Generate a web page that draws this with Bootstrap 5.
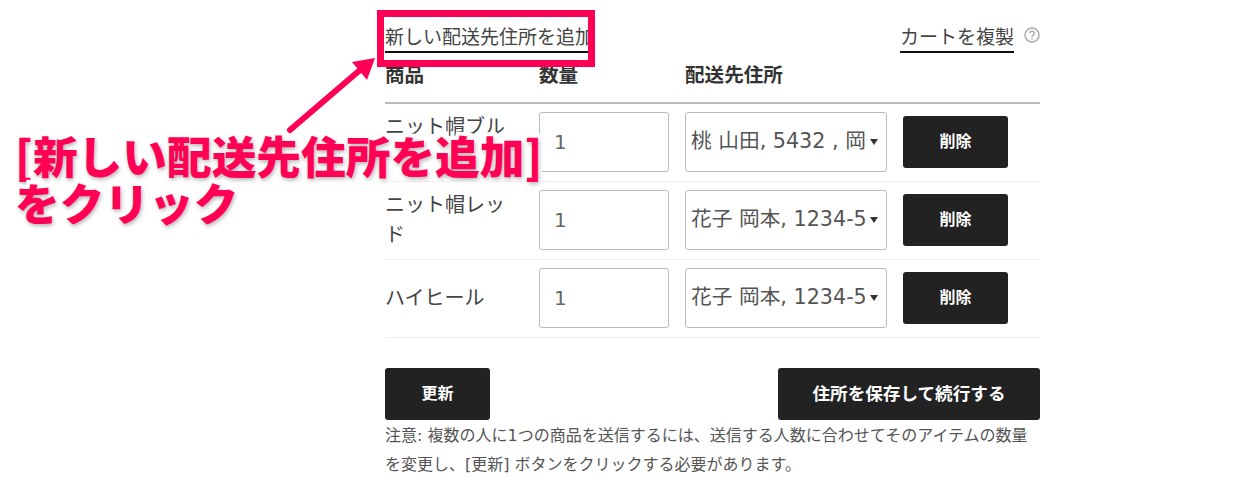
<!DOCTYPE html>
<html lang="ja">
<head>
  <meta charset="UTF-8">
  <title>複数の住所に配送</title>
  <link href="https://cdn.jsdelivr.net/npm/bootstrap@5.3.2/dist/css/bootstrap.min.css" rel="stylesheet">
  <style>
    body { height: 497px; overflow: hidden; background: #fff; color: #444; font-family: "DejaVu Sans", "Noto Sans CJK JP", sans-serif; }
    .page-wrap { width: 655px; margin-left: 385px; padding-top: 19px; }
    .top-links { height: 45px; font-size: 19px; line-height: 36px; }
    .top-links a { color: #444; text-decoration: none; border-bottom: 2px solid #111; display: inline-block; height: 34px; }
    .help-dot { width: 16px; height: 16px; margin: 8px 0 0 10px; }
    .ship-table { table-layout: fixed; width: 655px; margin: 0; }
    .ship-table th { font-size: 19.6px; line-height: 24px; font-weight: 700; color: #333; padding: 0 0 14px; border-bottom: 2px solid #bbb; height: 38px; }
    .ship-table td { font-size: 20px; line-height: 30px; color: #444; padding: 8px 16px 9px 0; border-bottom: 1px solid #eee; height: 78px; vertical-align: middle; }
    .ship-table td:last-child { padding-right: 0; }
    .qty-input.form-control, .addr-select.form-select { height: 60px; border: 1px solid #bbb; border-radius: 3px; box-shadow: none; }
    .qty-input.form-control { width: 130px; padding: 0 14px; color: #666; font-size: 20px; }
    .addr-select.form-select { width: 202px; padding: 0 21px 0 5px; color: #555; font-size: 20.7px; background-size: 8px 6px; background-position: right 8px center; background-image: url("data:image/svg+xml,%3csvg xmlns='http://www.w3.org/2000/svg' viewBox='0 0 8 6'%3e%3cpath fill='%23333' d='M0 0h8L4 6z'/%3e%3c/svg%3e"); }
    .dark-btn.btn { background: #222; border: 0; border-radius: 3px; color: #fff; font-weight: 700; height: 52px; font-size: 16px; padding: 0; }
    .del-btn, .upd-btn { width: 105px; }
    .del-btn.btn { display: block; }
    .save-btn { width: 262px; }
    .dark-btn.save-btn { font-size: 17.6px; }
    .btn-line { margin-top: 30px; }
    .note-text { font-size: 16px; line-height: 29px; color: #555; margin: 1px 0 0; }
    .mark-box { position: absolute; left: 377px; top: 10px; width: 218px; height: 57px; border: 7px solid #ff0055; }
    .mark-arrow { position: absolute; left: 280px; top: 50px; }
    .mark-text { position: absolute; left: 15px; top: 131px; color: #ff0055; font-weight: 900; font-size: 44.7px; line-height: 47px; font-family: "Noto Sans CJK JP", sans-serif; -webkit-text-stroke: 8px #fff; paint-order: stroke fill; text-shadow: 1px 2px 4px rgba(0,0,0,.3); white-space: nowrap; }
  </style>
</head>
<body>
  <div class="page-wrap">
    <div class="top-links d-flex justify-content-between align-items-start">
      <a href="#">新しい配送先住所を追加</a>
      <span class="d-flex align-items-start">
        <a href="#">カートを複製</a>
        <svg class="help-dot" viewBox="0 0 16 16" fill="none" stroke="#aaa">
          <circle cx="8" cy="8" r="7" stroke-width="1.5"/>
          <path d="M5.8 6.3a2.2 2.2 0 1 1 3.4 1.8c-.8.5-1.2.9-1.2 1.8" stroke-width="1.5"/>
          <path d="M8 11v1.5" stroke-width="1.5"/>
        </svg>
      </span>
    </div>
    <table class="ship-table">
      <colgroup><col style="width:154px"><col style="width:146px"><col style="width:218px"><col style="width:137px"></colgroup>
      <thead>
        <tr><th>商品</th><th>数量</th><th>配送先住所</th><th></th></tr>
      </thead>
      <tbody>
        <tr>
          <td>ニット帽ブルー</td>
          <td><input class="form-control qty-input" type="text" value="1"></td>
          <td><select class="form-select addr-select"><option>桃 山田, 5432 , 岡山県岡山市</option></select></td>
          <td><button class="btn dark-btn del-btn">削除</button></td>
        </tr>
        <tr>
          <td>ニット帽レッド</td>
          <td><input class="form-control qty-input" type="text" value="1"></td>
          <td><select class="form-select addr-select"><option>花子 岡本, 1234-5678</option></select></td>
          <td><button class="btn dark-btn del-btn">削除</button></td>
        </tr>
        <tr>
          <td>ハイヒール</td>
          <td><input class="form-control qty-input" type="text" value="1"></td>
          <td><select class="form-select addr-select"><option>花子 岡本, 1234-5678</option></select></td>
          <td><button class="btn dark-btn del-btn">削除</button></td>
        </tr>
      </tbody>
    </table>
    <div class="btn-line d-flex justify-content-between">
      <button class="btn dark-btn upd-btn">更新</button>
      <button class="btn dark-btn save-btn">住所を保存して続行する</button>
    </div>
    <p class="note-text">注意: 複数の人に1つの商品を送信するには、送信する人数に合わせてそのアイテムの数量を変更し、[更新] ボタンをクリックする必要があります。</p>
  </div>

  <div class="mark-box"></div>
  <svg class="mark-arrow" width="100" height="90" viewBox="0 0 100 90">
    <path d="M10 80 L80 20" stroke="#ff0055" stroke-width="6" stroke-linecap="round"/>
    <path d="M95 8 L72 12 L87 30 Z" fill="#ff0055"/>
  </svg>
  <div class="mark-text">[新しい配送先住所を追加]<br>をクリック</div>

  <script src="https://cdn.jsdelivr.net/npm/bootstrap@5.3.2/dist/js/bootstrap.bundle.min.js"></script>
</body>
</html>
